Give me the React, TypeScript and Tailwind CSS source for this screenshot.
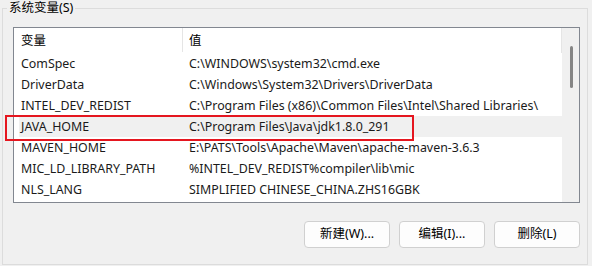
import React from 'react'

const rows = [
  { name: 'ComSpec', value: 'C:\\WINDOWS\\system32\\cmd.exe' },
  { name: 'DriverData', value: 'C:\\Windows\\System32\\Drivers\\DriverData' },
  { name: 'INTEL_DEV_REDIST', value: 'C:\\Program Files (x86)\\Common Files\\Intel\\Shared Libraries\\' },
  { name: 'JAVA_HOME', value: 'C:\\Program Files\\Java\\jdk1.8.0_291', selected: true },
  { name: 'MAVEN_HOME', value: 'E:\\PATS\\Tools\\Apache\\Maven\\apache-maven-3.6.3' },
  { name: 'MIC_LD_LIBRARY_PATH', value: '%INTEL_DEV_REDIST%compiler\\lib\\mic' },
  { name: 'NLS_LANG', value: 'SIMPLIFIED CHINESE_CHINA.ZHS16GBK' },
]

const font = "font-['Noto_Sans','Noto_Sans_CJK_SC',sans-serif]"

export default function App() {
  return (
    <div className={`relative w-[592px] h-[266px] bg-[#f0f0f0] overflow-hidden text-[12.4px] text-[#1a1a1a] ${font}`}>
      <fieldset className="ml-[2px] w-[586px] h-[265px] border border-[#dcdcdc] pl-[10px] pr-[7px]">
        <legend className="-ml-[6px] px-[2px] leading-[16px] text-[12.5px] text-black">系统变量(S)</legend>

        {/* list view */}
        <div className="mt-[11px] w-[567px] h-[176px] border border-[#828790] bg-white flex">
          <div className="flex-1 flex flex-col">
            <div className="h-[25px] flex items-center">
              <div className="w-[168px] pl-[7px] pt-[1px] text-black">变量</div>
              <div className="w-px h-[24px] self-start bg-[#e5e5e5]" />
              <div className="flex-1 pl-[6px] pt-[1px] text-black">值</div>
              <div className="w-px h-[25px] self-start bg-[#e5e5e5]" />
            </div>
            {rows.map((r) => (
              <div key={r.name} className="h-[21px] pl-[5px] flex">
                <div className={`flex-1 flex items-center pt-[1px] ${r.selected ? 'bg-[#f0f0f0]' : ''}`}>
                  <div className="w-[163px] pl-[2px] whitespace-nowrap">{r.name}</div>
                  <div className="flex-1 pl-[7px] whitespace-nowrap">{r.value}</div>
                </div>
              </div>
            ))}
          </div>
          {/* scrollbar */}
          <div className="w-[17px] bg-[#f0f0f0] flex justify-center pt-[18px] pl-[1px]">
            <div className="w-[3px] h-[42px] rounded-full bg-[#858585]" />
          </div>
        </div>

        <div className="mt-[18px] w-[567px] flex justify-end gap-[9px]">
          {['新建(W)...', '编辑(I)...', '删除(L)'].map((b) => (
            <button
              key={b}
              className="w-[86px] h-[27px] rounded-[4px] border border-[#d0d0d0] bg-[#fdfdfd] text-[12.5px] text-black"
            >
              {b}
            </button>
          ))}
        </div>
      </fieldset>

      {/* annotation box */}
      <div className="absolute left-[5px] top-[115px] w-[409px] h-[26px] border-[2px] border-[#e5161f]" />
    </div>
  )
}
